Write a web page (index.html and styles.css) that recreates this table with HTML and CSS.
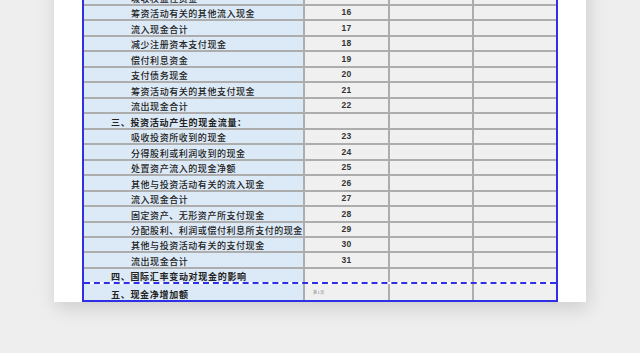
FILE: index.html
```html
<!DOCTYPE html>
<html lang="zh">
<head>
<meta charset="utf-8">
<title>现金流量表</title>
<link rel="stylesheet" href="styles.css">
</head>
<body>
<div class="page">
  <div class="sheet">
    <div class="row"><div class="c lab">吸收权益性资金</div><div class="c num">15</div><div class="c"></div><div class="c"></div></div>
    <div class="row"><div class="c lab">筹资活动有关的其他流入现金</div><div class="c num">16</div><div class="c"></div><div class="c"></div></div>
    <div class="row"><div class="c lab">流入现金合计</div><div class="c num">17</div><div class="c"></div><div class="c"></div></div>
    <div class="row"><div class="c lab">减少注册资本支付现金</div><div class="c num">18</div><div class="c"></div><div class="c"></div></div>
    <div class="row"><div class="c lab">偿付利息资金</div><div class="c num">19</div><div class="c"></div><div class="c"></div></div>
    <div class="row"><div class="c lab">支付债务现金</div><div class="c num">20</div><div class="c"></div><div class="c"></div></div>
    <div class="row"><div class="c lab">筹资活动有关的其他支付现金</div><div class="c num">21</div><div class="c"></div><div class="c"></div></div>
    <div class="row"><div class="c lab">流出现金合计</div><div class="c num">22</div><div class="c"></div><div class="c"></div></div>
    <div class="row"><div class="c head">三、投资活动产生的现金流量：</div><div class="c num"></div><div class="c"></div><div class="c"></div></div>
    <div class="row"><div class="c lab">吸收投资所收到的现金</div><div class="c num">23</div><div class="c"></div><div class="c"></div></div>
    <div class="row"><div class="c lab">分得股利或利润收到的现金</div><div class="c num">24</div><div class="c"></div><div class="c"></div></div>
    <div class="row"><div class="c lab">处置资产流入的现金净额</div><div class="c num">25</div><div class="c"></div><div class="c"></div></div>
    <div class="row"><div class="c lab">其他与投资活动有关的流入现金</div><div class="c num">26</div><div class="c"></div><div class="c"></div></div>
    <div class="row"><div class="c lab">流入现金合计</div><div class="c num">27</div><div class="c"></div><div class="c"></div></div>
    <div class="row"><div class="c lab">固定资产、无形资产所支付现金</div><div class="c num">28</div><div class="c"></div><div class="c"></div></div>
    <div class="row"><div class="c lab">分配股利、利润或偿付利息所支付的现金</div><div class="c num">29</div><div class="c"></div><div class="c"></div></div>
    <div class="row"><div class="c lab">其他与投资活动有关的支付现金</div><div class="c num">30</div><div class="c"></div><div class="c"></div></div>
    <div class="row"><div class="c lab">流出现金合计</div><div class="c num">31</div><div class="c"></div><div class="c"></div></div>
    <div class="row dashed"><div class="c head">四、国际汇率变动对现金的影响</div><div class="c num"></div><div class="c"></div><div class="c"></div></div>
    <div class="row last"><div class="c head">五、现金净增加额</div><div class="c pageno">第1页</div><div class="c"></div><div class="c"></div></div>
  </div>
</div>
</body>
</html>
```
FILE: styles.css
```css
html, body {
  margin: 0;
  padding: 0;
}
body {
  background: #eeeeee;
  width: 640px;
  height: 353px;
  overflow: hidden;
  font-family: "Noto Sans CJK SC", "Noto Sans", sans-serif;
  color: #222;
}
.page {
  width: 476px;
  margin-left: 54px;
  margin-top: -50px;
  padding: 38.5px 28px 0 28px;
  background: #ffffff;
  box-shadow: 2px 6px 18px rgba(0, 0, 0, 0.14);
}
.sheet {
  width: 476px;
  box-sizing: border-box;
  border: 2px solid #2f2fe6;
}
.row {
  display: grid;
  grid-template-columns: 221px 85px 84px 82px;
  height: 15.47px;
  box-sizing: border-box;
  border-bottom: 2px solid #adadad;
}
.row.dashed {
  border-bottom: 2px dashed #2f2fe6;
}
.row.last {
  border-bottom: none;
  height: 15.5px;
}
.c {
  background: #f0f0f0;
  border-right: 2px solid #adadad;
  box-sizing: border-box;
  display: flex;
  align-items: flex-end;
  font-size: 9px;
  line-height: 11px;
  letter-spacing: 0.55px;
  white-space: nowrap;
  overflow: hidden;
}
.c:last-child {
  border-right: none;
}
.lab, .head {
  background: #dce9f6;
  padding-left: 47px;
  font-weight: 500;
}
.head {
  padding-left: 27px;
  font-weight: 700;
  letter-spacing: 0.7px;
}
.num {
  justify-content: center;
  font-family: "Liberation Sans", Arial, sans-serif;
  font-size: 8.5px;
  font-weight: 700;
  color: #333;
  letter-spacing: 0.3px;
  padding-bottom: 1px;
}
.pageno {
  font-size: 4px;
  line-height: 8px;
  color: #888;
  padding-left: 8px;
  align-items: center;
}
```
